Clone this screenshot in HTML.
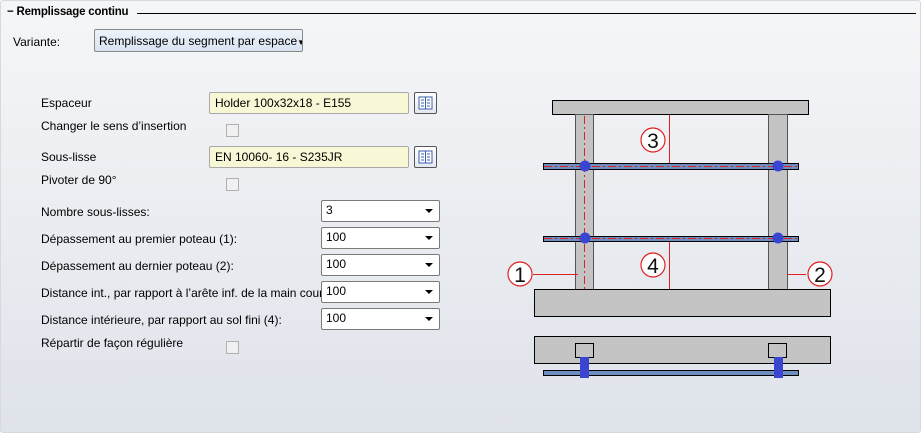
<!DOCTYPE html>
<html><head><meta charset="utf-8"><style>
*{margin:0;padding:0;box-sizing:border-box}
body{width:923px;height:435px;overflow:hidden;font-family:"Liberation Sans",sans-serif;font-size:12px;color:#000;background:#fff;position:relative}
.panel{position:absolute;left:0;top:0;width:921px;height:433px;background:linear-gradient(#f5f6f8,#dfe3ea);border:1px solid #d6d9de;border-radius:3px}
.a{position:absolute;white-space:nowrap}
.in{position:absolute;height:22px;background:#f9f8d6;border:1px solid #a9a9a9;border-radius:2px;padding:3px 5px}
.btn{position:absolute;width:23px;height:22px;border:1px solid #555;border-radius:2px;background:linear-gradient(#fff,#e5e9f0)}
.cb{position:absolute;width:13px;height:13px;border:1px solid #b0b0b0;background:#f0f0f0}
.dd{position:absolute;left:321px;width:119px;height:22px;background:#fff;border:1px solid #7a7a7a;border-radius:2px;padding:2px 4px}
.dd:after{content:"";position:absolute;right:6px;top:8px;border-left:4px solid transparent;border-right:4px solid transparent;border-top:4px solid #000}
</style></head><body>
<div class="panel"></div>
<div class="a" style="left:7px;top:6px;font-weight:bold;font-size:11.5px;letter-spacing:-0.2px">− Remplissage continu</div>
<div class="a" style="left:137px;top:13px;width:779px;height:1px;background:#000"></div>
<div class="a" style="left:13px;top:35px">Variante:</div>
<div class="a" style="left:94px;top:29px;width:209px;height:23px;border:1px solid #888;border-radius:2px;background:linear-gradient(#eef3fa,#d9e3f0);padding:4px 4px;overflow:hidden">Remplissage du segment par espace<span style="font-size:8px">▼</span></div>

<div class="a" style="left:41px;top:96px">Espaceur</div>
<div class="in" style="left:209px;top:92px;width:200px">Holder 100x32x18 - E155</div>
<div class="btn" style="left:414px;top:92px"><svg width="21" height="20"><rect x="4" y="4" width="13" height="12" fill="#fff" stroke="#3a5fb0"/><path d="M10.5 4v12M6 7h3M6 10h3M6 13h3M12 7h3M12 10h3M12 13h3" stroke="#3a5fb0"/></svg></div>
<div class="a" style="left:41px;top:119px">Changer le sens d’insertion</div>
<div class="cb" style="left:226px;top:124px"></div>
<div class="a" style="left:41px;top:150px">Sous-lisse</div>
<div class="in" style="left:209px;top:146px;width:200px">EN 10060- 16 - S235JR</div>
<div class="btn" style="left:414px;top:146px"><svg width="21" height="20"><rect x="4" y="4" width="13" height="12" fill="#fff" stroke="#3a5fb0"/><path d="M10.5 4v12M6 7h3M6 10h3M6 13h3M12 7h3M12 10h3M12 13h3" stroke="#3a5fb0"/></svg></div>
<div class="a" style="left:41px;top:173px">Pivoter de 90°</div>
<div class="cb" style="left:226px;top:178px"></div>

<div class="a" style="left:41px;top:205px">Nombre sous-lisses:</div>
<div class="dd" style="top:200px">3</div>
<div class="a" style="left:41px;top:232px">Dépassement au premier poteau (1):</div>
<div class="dd" style="top:227px">100</div>
<div class="a" style="left:41px;top:259px">Dépassement au dernier poteau (2):</div>
<div class="dd" style="top:254px">100</div>
<div class="a" style="left:41px;top:286px;width:280px;overflow:hidden">Distance int., par rapport à l’arête inf. de la main courante (3):</div>
<div class="dd" style="top:281px">100</div>
<div class="a" style="left:41px;top:313px">Distance intérieure, par rapport au sol fini (4):</div>
<div class="dd" style="top:308px">100</div>
<div class="a" style="left:41px;top:336px">Répartir de façon régulière</div>
<div class="cb" style="left:226px;top:341px"></div>

<svg class="a" style="left:0;top:0" width="923" height="435">
<g stroke="#000" stroke-width="1" fill="#c4c4c4">
<rect x="552.5" y="100.5" width="256" height="14"/>
<rect x="575.5" y="114.5" width="18" height="175" stroke="#555"/>
<rect x="768.5" y="114.5" width="19" height="175" stroke="#555"/>
<rect x="534.5" y="289.5" width="296" height="27"/>
<rect x="534.5" y="336.5" width="296" height="27"/>
<rect x="575.5" y="343.5" width="18" height="14"/>
<rect x="768.5" y="343.5" width="18" height="14"/>
</g>
<g fill="#6d8fc0" stroke="#000">
<rect x="543.5" y="163.5" width="255" height="6"/>
<rect x="543.5" y="236.5" width="255" height="5"/>
<rect x="543.5" y="370.5" width="255" height="5"/>
</g>
<rect x="580" y="357" width="9" height="21" fill="#3a46d0"/>
<rect x="774" y="357" width="9" height="21" fill="#3a46d0"/>
<g stroke="#e02020" stroke-width="1" stroke-dasharray="8,3,2,3" fill="none">
<path d="M584.5 116v173M544 166.5h254M544 238.5h254"/>
</g>
<g fill="#3a46d0"><circle cx="585" cy="166" r="5.5"/><circle cx="778" cy="166" r="5.5"/><circle cx="585" cy="238" r="5.5"/><circle cx="778" cy="238" r="5.5"/></g>
<g stroke="#e02020" fill="none" stroke-width="1">
<path d="M669.5 115v48M669.5 242v47M533 274.5h45M787 274.5h19"/>
</g>
<g fill="#fff" stroke="#e02020" stroke-width="1.2">
<circle cx="653" cy="140" r="12"/><circle cx="653" cy="265" r="12"/><circle cx="520" cy="274" r="12"/><circle cx="820" cy="274" r="12"/>
</g>
<g font-family="Liberation Sans,sans-serif" font-size="21" text-anchor="middle" fill="#111">
<text x="653" y="148">3</text><text x="653" y="273">4</text><text x="520" y="282">1</text><text x="820" y="282">2</text>
</g>
</svg>
</body></html>
